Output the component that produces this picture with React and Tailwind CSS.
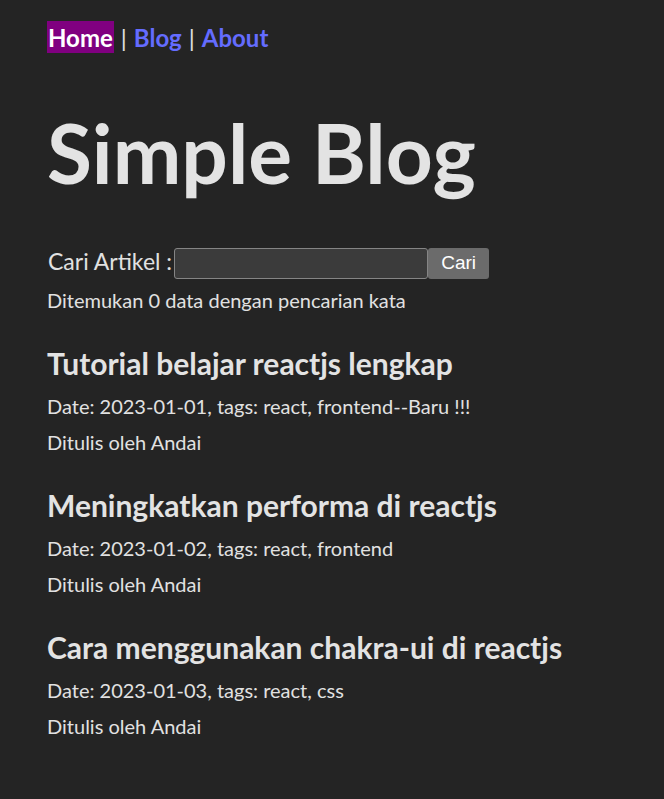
import React from "react";

const posts = [
  { title: "Tutorial belajar reactjs lengkap", date: "2023-01-01", tags: "react, frontend", isNew: true },
  { title: "Meningkatkan performa di reactjs", date: "2023-01-02", tags: "react, frontend", isNew: false },
  { title: "Cara menggunakan chakra-ui di reactjs", date: "2023-01-03", tags: "react, css", isNew: false },
];

export default function App() {
  return (
    <div className="min-h-[799px] bg-[#242424] text-[#e1e1e1] font-['Lato',sans-serif] px-[47px] pt-[21px] pb-[40px]">
      <nav className="flex items-start h-[32px] text-[24px] leading-[30px] font-bold">
        <a className="inline-block h-[32px] pt-[2px] bg-[#800080] text-white pl-[1px] pr-[1px]">Home</a>
        <span className="pt-[2px] ml-[7px] mr-[7px] text-[#e1e1e1] font-normal">|</span>
        <a className="pt-[2px] text-[#646cff]">Blog</a>
        <span className="pt-[2px] ml-[7px] mr-[7px] text-[#e1e1e1] font-normal">|</span>
        <a className="pt-[2px] text-[#646cff]">About</a>
      </nav>

      <h1 className="mt-[58px] text-[82px] leading-[82px] font-bold text-[#e3e3e3]">Simple Blog</h1>

      <div className="mt-[55px] flex items-start">
        <label className="text-[23px] leading-[24px] pt-[1px] pl-[1px]">Cari Artikel :</label>
        <input
          type="text"
          className="ml-[2px] w-[254px] h-[31px] bg-[#3b3b3b] border border-[#858585] rounded-[3px] outline-none"
        />
        <button className="h-[31px] w-[61px] bg-[#6b6b6b] rounded-[3px] text-white text-[19px] font-['Liberation_Sans',sans-serif]">
          Cari
        </button>
      </div>

      <p className="mt-[3px] text-[20px] leading-[36px]">Ditemukan 0 data dengan pencarian kata</p>

      <div className="mt-[27px] flex flex-col gap-[27px]">
        {posts.map((p) => (
          <article key={p.title}>
            <h2 className="text-[30px] leading-[36px] font-bold text-[#e3e3e3]">{p.title}</h2>
            <p className="mt-[7px] text-[20px] leading-[36px]">
              Date: {p.date}, tags: {p.tags}
              {p.isNew ? "--Baru !!!" : ""}
            </p>
            <p className="text-[20px] leading-[36px]">Ditulis oleh Andai</p>
          </article>
        ))}
      </div>
    </div>
  );
}
